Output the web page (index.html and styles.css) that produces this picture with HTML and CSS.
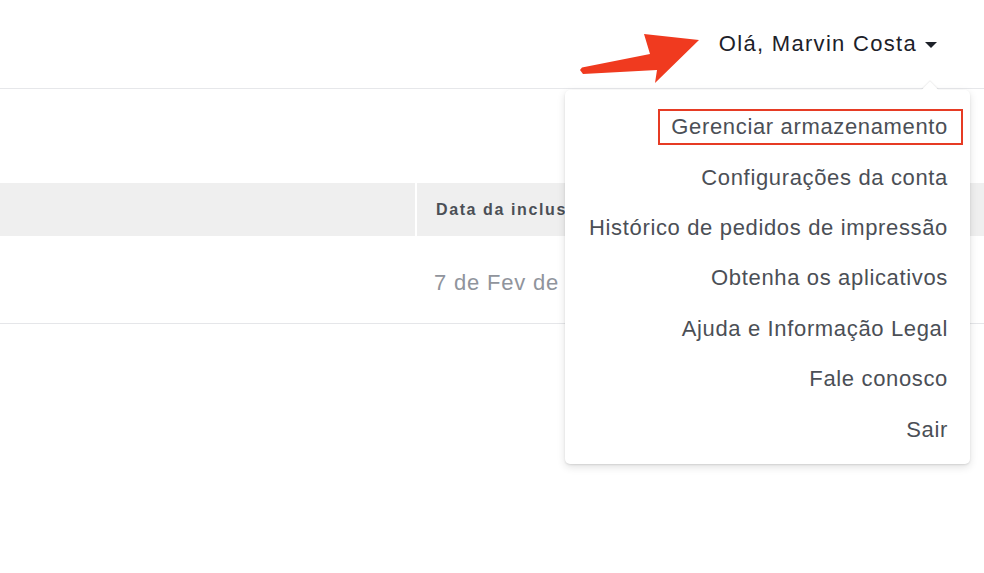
FILE: index.html
```html
<!DOCTYPE html>
<html lang="pt-BR">
<head>
<meta charset="utf-8">
<title>Conta</title>
<link rel="stylesheet" href="styles.css">
</head>
<body>
<header class="topbar">
  <div class="user">
    <span class="user-name">Olá, Marvin Costa</span>
    <span class="caret"></span>
  </div>
</header>
<main class="content">
  <div class="table">
    <div class="thead">
      <div class="col col-name"></div>
      <div class="col col-date">Data da inclusão</div>
    </div>
    <div class="trow">
      <div class="col col-name"></div>
      <div class="col col-date cell-date">7 de Fev de 2018</div>
    </div>
  </div>
</main>
<svg class="arrow" width="130" height="60" viewBox="575 30 130 60" aria-hidden="true">
  <polygon points="580,70 582,67.5 650,54 644,34 699,40 655,83 657,70 583,74" fill="#f03a1f"/>
</svg>
<nav class="menu">
  <ul class="menu-list">
    <li class="menu-item"><span class="boxed">Gerenciar armazenamento</span></li>
    <li class="menu-item">Configurações da conta</li>
    <li class="menu-item">Histórico de pedidos de impressão</li>
    <li class="menu-item">Obtenha os aplicativos</li>
    <li class="menu-item">Ajuda e Informação Legal</li>
    <li class="menu-item">Fale conosco</li>
    <li class="menu-item">Sair</li>
  </ul>
</nav>
</body>
</html>
```
FILE: styles.css
```css
* { box-sizing: border-box; }
html, body { margin: 0; padding: 0; }
body {
  width: 984px;
  height: 573px;
  overflow: hidden;
  background: #ffffff;
  font-family: "Liberation Sans", Arial, sans-serif;
  position: relative;
}
.topbar {
  height: 89px;
  border-bottom: 1px solid #e6e7ea;
  display: flex;
  justify-content: flex-end;
  align-items: center;
  padding-right: 47px;
  padding-bottom: 0;
}
.user {
  display: flex;
  align-items: center;
  gap: 8px;
}
.user-name {
  font-size: 22px;
  letter-spacing: 1.3px;
  color: #1d2129;
}
.caret {
  width: 0;
  height: 0;
  border-left: 6px solid transparent;
  border-right: 6px solid transparent;
  border-top: 6px solid #1d2129;
  margin-top: 2px;
}
.content {
  padding-top: 94px;
}
.thead {
  display: flex;
  height: 53px;
  background: #efefef;
}
.col-name {
  width: 417px;
  border-right: 2px solid #ffffff;
}
.col-date {
  flex: 1;
  padding-left: 19px;
  display: flex;
  align-items: center;
  white-space: nowrap;
  overflow: hidden;
}
.thead .col-date {
  font-size: 16px;
  letter-spacing: 1.6px;
  font-weight: bold;
  color: #4b4f56;
}
.trow {
  display: flex;
  height: 88px;
  border-bottom: 1px solid #e5e6e9;
}
.trow .col-name { border-right: 0; }
.cell-date {
  font-size: 22px;
  letter-spacing: 0.8px;
  color: #90949c;
  padding-left: 17px;
  padding-top: 6px;
}
.arrow {
  position: absolute;
  left: 575px;
  top: 30px;
}
.menu {
  position: absolute;
  left: 565px;
  top: 90px;
  width: 405px;
  height: 374px;
  background: #ffffff;
  border-radius: 5px;
  box-shadow: 0 1px 2px rgba(0,0,0,0.10), 0 3px 8px rgba(0,0,0,0.12);
}
.menu::before {
  content: "";
  position: absolute;
  top: -6px;
  right: 34px;
  width: 12px;
  height: 12px;
  background: #ffffff;
  transform: rotate(45deg);
  box-shadow: -1px -1px 1px rgba(0,0,0,0.06);
}
.menu-list {
  list-style: none;
  margin: 0;
  padding: 12px 22px 0 0;
  position: relative;
}
.menu-item {
  height: 50.4px;
  display: flex;
  align-items: center;
  justify-content: flex-end;
  font-size: 22px;
  letter-spacing: 0.65px;
  color: #4b4f56;
  white-space: nowrap;
}
.boxed {
  display: inline-flex;
  align-items: center;
  height: 36px;
  padding: 0 13px 0 11px;
  margin-right: -15px;
  border: 2px solid #e63b24;
}
```
